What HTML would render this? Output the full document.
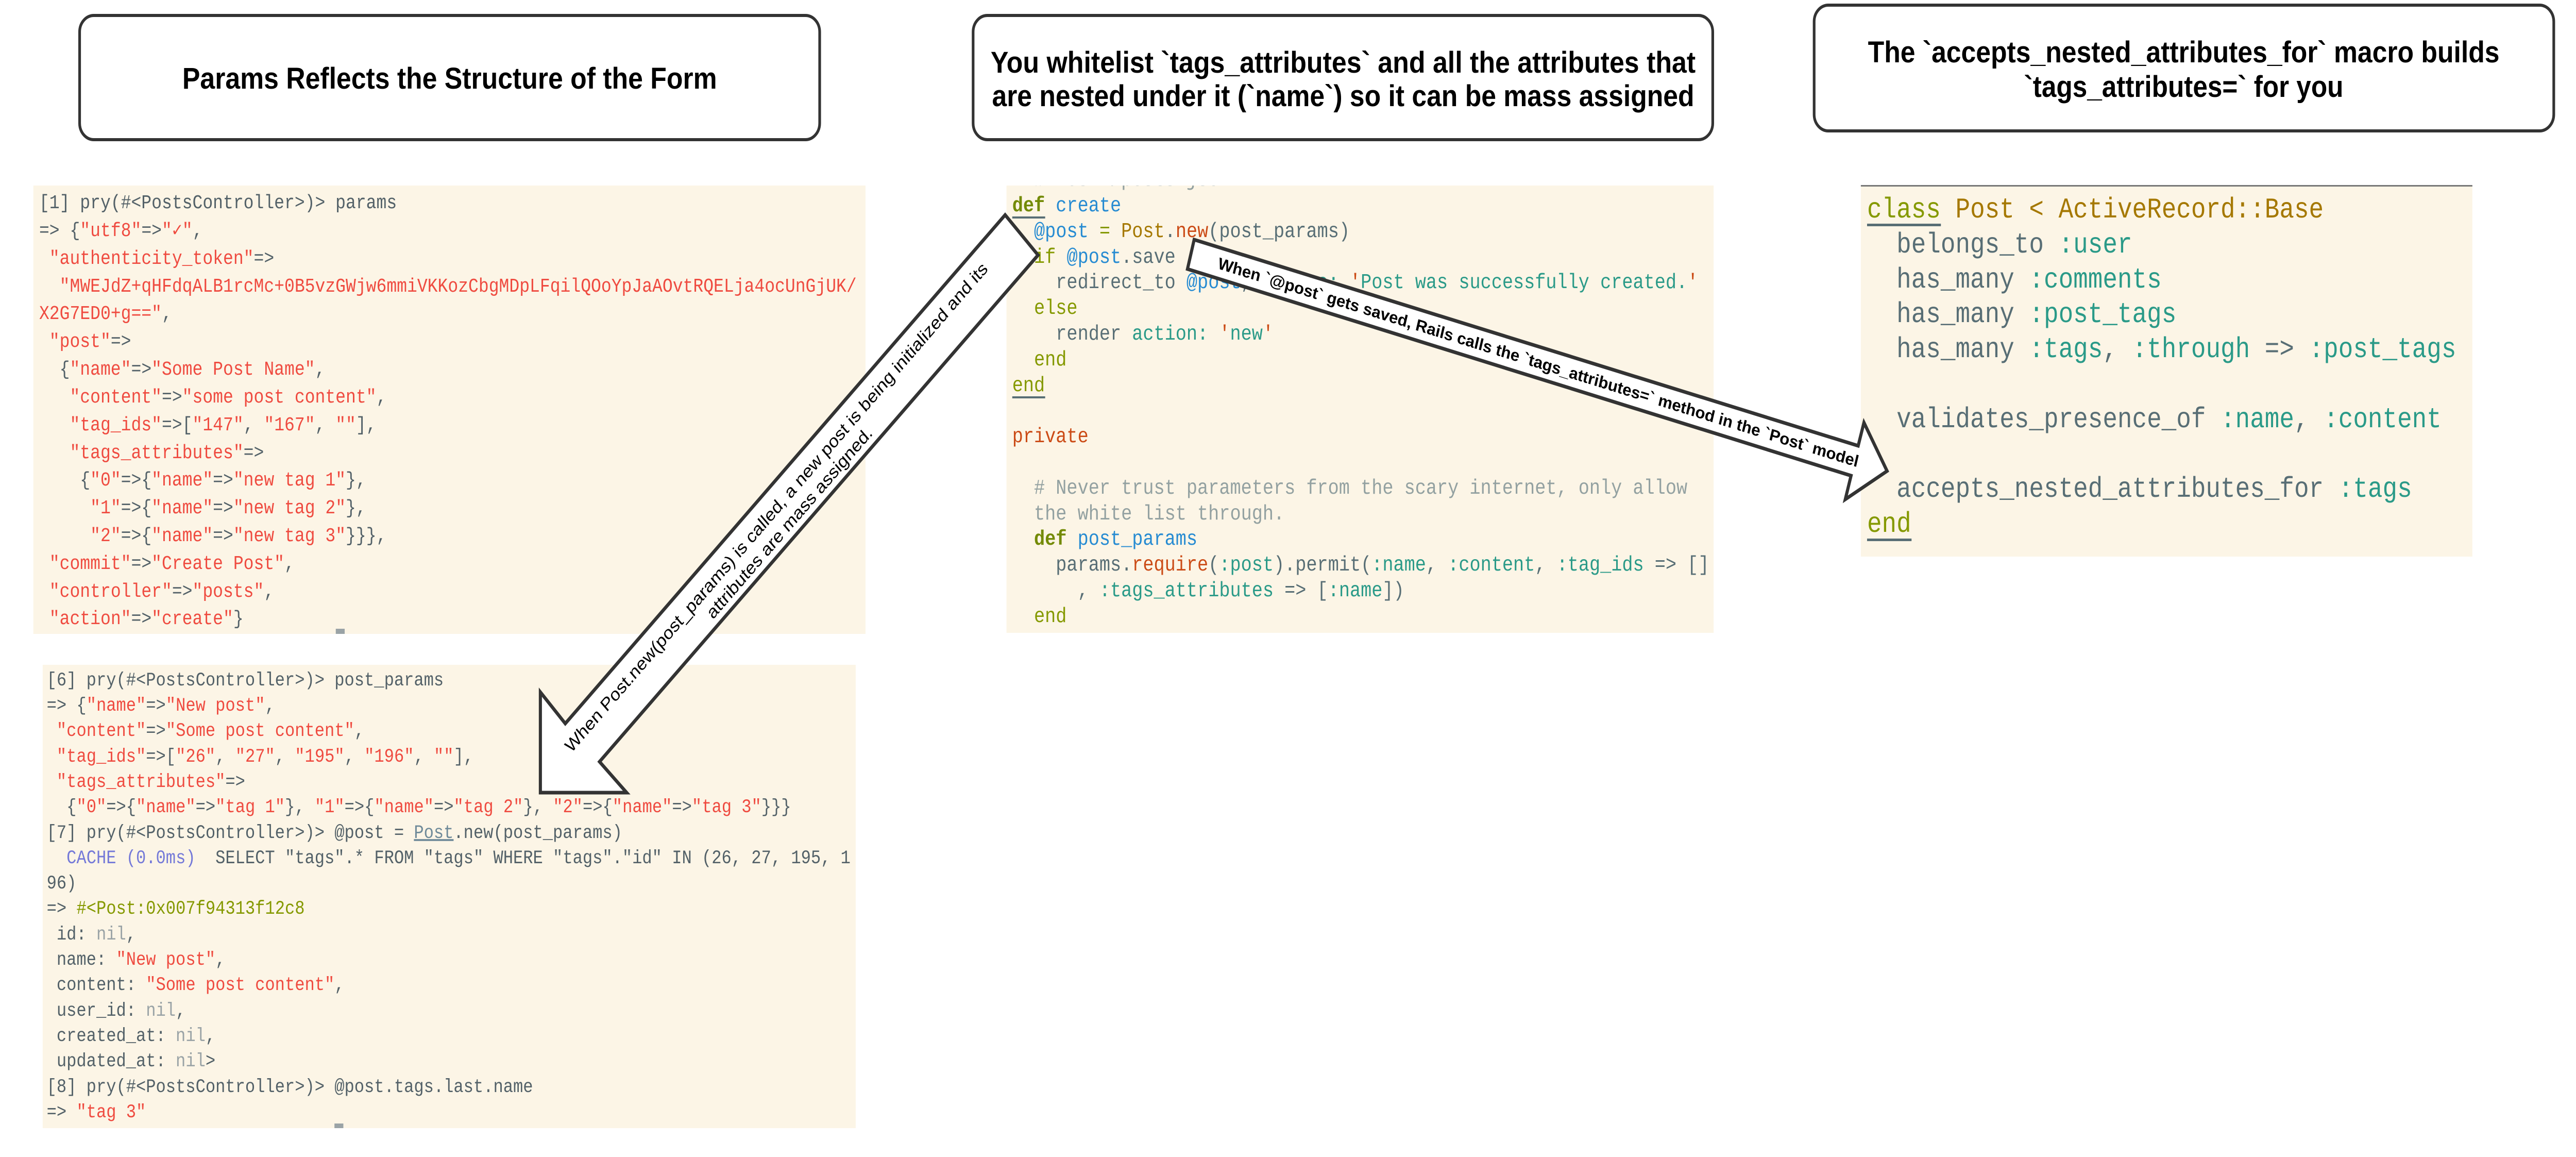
<!DOCTYPE html>
<html><head><meta charset="utf-8">
<style>
html,body{margin:0;padding:0;background:#fff;overflow:hidden;}
svg{display:block;width:100vw;height:100vh;}
.m text{font-family:"Liberation Mono","DejaVu Sans Mono",monospace;white-space:pre;fill:#536168;}
.m .r{fill:#ef4b40}.m .g{fill:#9aa3a6}.m .ol{fill:#859900}.m .pu{fill:#7479d8}
.m .kw{fill:#738a05;font-weight:bold}.m .bl{fill:#268bd2}.m .br{fill:#a57800}.m .rd{fill:#cb4b16}.m .tl{fill:#2a9a88}.m .cm{fill:#93a1a1}.m .sl{fill:#586e75}
</style></head><body>
<svg viewBox="0 0 5792 2245" preserveAspectRatio="none" xmlns="http://www.w3.org/2000/svg" xml:space="preserve" font-family="Liberation Sans, Arial, sans-serif">
<defs>
<clipPath id="c1"><rect x="75" y="360" width="1871" height="870"/></clipPath>
<clipPath id="c2"><rect x="96" y="1290" width="1828" height="899"/></clipPath>
<clipPath id="c3"><rect x="2263" y="360" width="1590" height="868"/></clipPath>
<clipPath id="c4"><rect x="4184" y="360" width="1375" height="720"/></clipPath>
</defs>

<rect x="75" y="360" width="1871" height="870" fill="#fcf5e6"/>
<rect x="96" y="1290" width="1828" height="899" fill="#fcf5e6"/>
<rect x="2263" y="360" width="1590" height="868" fill="#fcf5e6"/>
<rect x="4184" y="360" width="1375" height="720" fill="#fcf5e6"/>
<rect x="4184" y="359" width="1375" height="3" fill="#777"/>

<g class="m" clip-path="url(#c1)" font-size="38.3">
<text x="88" y="404">[1] pry(#&lt;PostsController&gt;)&gt; params</text>
<text x="88" y="458">=&gt; {<tspan class="r">"utf8"</tspan>=&gt;<tspan class="r">"✓"</tspan>,</text>
<text x="88" y="512"> <tspan class="r">"authenticity_token"</tspan>=&gt;</text>
<text x="88" y="566">  <tspan class="r">"MWEJdZ+qHFdqALB1rcMc+0B5vzGWjw6mmiVKKozCbgMDpLFqilQOoYpJaAOvtRQELja4ocUnGjUK/</tspan></text>
<text x="88" y="619"><tspan class="r">X2G7ED0+g=="</tspan>,</text>
<text x="88" y="673"> <tspan class="r">"post"</tspan>=&gt;</text>
<text x="88" y="727">  {<tspan class="r">"name"</tspan>=&gt;<tspan class="r">"Some Post Name"</tspan>,</text>
<text x="88" y="781">   <tspan class="r">"content"</tspan>=&gt;<tspan class="r">"some post content"</tspan>,</text>
<text x="88" y="835">   <tspan class="r">"tag_ids"</tspan>=&gt;[<tspan class="r">"147"</tspan>, <tspan class="r">"167"</tspan>, <tspan class="r">""</tspan>],</text>
<text x="88" y="889">   <tspan class="r">"tags_attributes"</tspan>=&gt;</text>
<text x="88" y="942">    {<tspan class="r">"0"</tspan>=&gt;{<tspan class="r">"name"</tspan>=&gt;<tspan class="r">"new tag 1"</tspan>},</text>
<text x="88" y="996">     <tspan class="r">"1"</tspan>=&gt;{<tspan class="r">"name"</tspan>=&gt;<tspan class="r">"new tag 2"</tspan>},</text>
<text x="88" y="1050">     <tspan class="r">"2"</tspan>=&gt;{<tspan class="r">"name"</tspan>=&gt;<tspan class="r">"new tag 3"</tspan>}}},</text>
<text x="88" y="1104"> <tspan class="r">"commit"</tspan>=&gt;<tspan class="r">"Create Post"</tspan>,</text>
<text x="88" y="1158"> <tspan class="r">"controller"</tspan>=&gt;<tspan class="r">"posts"</tspan>,</text>
<text x="88" y="1211"> <tspan class="r">"action"</tspan>=&gt;<tspan class="r">"create"</tspan>}</text>
<text x="88" y="1265">[2] pry(#&lt;PostsController&gt;)&gt;</text>
<rect x="755" y="1220" width="20" height="10" fill="#9aa3a6"/>
</g>

<g class="m" clip-path="url(#c2)" font-size="37.2">
<text x="105" y="1330">[6] pry(#&lt;PostsController&gt;)&gt; post_params</text>
<text x="105" y="1379">=&gt; {<tspan class="r">"name"</tspan>=&gt;<tspan class="r">"New post"</tspan>,</text>
<text x="105" y="1428"> <tspan class="r">"content"</tspan>=&gt;<tspan class="r">"Some post content"</tspan>,</text>
<text x="105" y="1478"> <tspan class="r">"tag_ids"</tspan>=&gt;[<tspan class="r">"26"</tspan>, <tspan class="r">"27"</tspan>, <tspan class="r">"195"</tspan>, <tspan class="r">"196"</tspan>, <tspan class="r">""</tspan>],</text>
<text x="105" y="1527"> <tspan class="r">"tags_attributes"</tspan>=&gt;</text>
<text x="105" y="1576">  {<tspan class="r">"0"</tspan>=&gt;{<tspan class="r">"name"</tspan>=&gt;<tspan class="r">"tag 1"</tspan>}, <tspan class="r">"1"</tspan>=&gt;{<tspan class="r">"name"</tspan>=&gt;<tspan class="r">"tag 2"</tspan>}, <tspan class="r">"2"</tspan>=&gt;{<tspan class="r">"name"</tspan>=&gt;<tspan class="r">"tag 3"</tspan>}}}</text>
<text x="105" y="1626">[7] pry(#&lt;PostsController&gt;)&gt; @post = <tspan fill="#6f8a99" text-decoration="underline">Post</tspan>.new(post_params)</text>
<text x="105" y="1675">  <tspan class="pu">CACHE (0.0ms)</tspan>  SELECT "tags".* FROM "tags" WHERE "tags"."id" IN (26, 27, 195, 1</text>
<text x="105" y="1724">96)</text>
<text x="105" y="1773">=&gt; <tspan class="ol">#&lt;Post:0x007f94313f12c8</tspan></text>
<text x="105" y="1823"> id: <tspan class="g">nil</tspan>,</text>
<text x="105" y="1872"> name: <tspan class="r">"New post"</tspan>,</text>
<text x="105" y="1921"> content: <tspan class="r">"Some post content"</tspan>,</text>
<text x="105" y="1971"> user_id: <tspan class="g">nil</tspan>,</text>
<text x="105" y="2020"> created_at: <tspan class="g">nil</tspan>,</text>
<text x="105" y="2069"> updated_at: <tspan class="g">nil</tspan>&gt;</text>
<text x="105" y="2119">[8] pry(#&lt;PostsController&gt;)&gt; @post.tags.last.name</text>
<text x="105" y="2168">=&gt; <tspan class="r">"tag 3"</tspan></text>
<rect x="752" y="2180" width="20" height="9" fill="#9aa3a6"/>
</g>

<g class="m" clip-path="url(#c3)" font-size="40.8">
<text x="2276" y="360" class="cm">  # POST /posts.json</text>
<text x="2276" y="410"><tspan class="kw">def</tspan> <tspan class="bl">create</tspan></text>
<text x="2276" y="460" class="sl">  <tspan class="bl">@post</tspan> <tspan class="ol">=</tspan> <tspan class="br">Post</tspan>.<tspan class="rd">new</tspan>(post_params)</text>
<text x="2276" y="510" class="sl">  <tspan class="ol">if</tspan> <tspan class="bl">@post</tspan>.save</text>
<text x="2276" y="559" class="sl">    redirect_to <tspan class="bl">@post</tspan>, <tspan class="tl">notice:</tspan> <tspan class="rd">'</tspan><tspan class="tl">Post was successfully created.</tspan><tspan class="rd">'</tspan></text>
<text x="2276" y="609" class="ol">  else</text>
<text x="2276" y="659" class="sl">    render <tspan class="tl">action:</tspan> <tspan class="rd">'</tspan><tspan class="tl">new</tspan><tspan class="rd">'</tspan></text>
<text x="2276" y="709" class="ol">  end</text>
<text x="2276" y="759" class="ol">end</text>
<text x="2276" y="858" class="rd">private</text>
<text x="2276" y="958" class="cm">  # Never trust parameters from the scary internet, only allow</text>
<text x="2276" y="1008" class="cm">  the white list through.</text>
<text x="2276" y="1057">  <tspan class="kw">def</tspan> <tspan class="bl">post_params</tspan></text>
<text x="2276" y="1107" class="sl">    params.<tspan class="rd">require</tspan>(<tspan class="tl">:post</tspan>).permit(<tspan class="tl">:name</tspan>, <tspan class="tl">:content</tspan>, <tspan class="tl">:tag_ids</tspan> =&gt; []</text>
<text x="2276" y="1157" class="sl">      , <tspan class="tl">:tags_attributes</tspan> =&gt; [<tspan class="tl">:name</tspan>])</text>
<text x="2276" y="1207" class="ol">  end</text>
<rect x="2276" y="420" width="74" height="4" fill="#586e75"/>
<rect x="2276" y="769" width="74" height="4" fill="#586e75"/>
</g>

<g class="m" clip-path="url(#c4)" font-size="55.2">
<text x="4198" y="422"><tspan class="ol">class</tspan> <tspan class="br">Post &lt; ActiveRecord::Base</tspan></text>
<text x="4198" y="490" class="sl">  belongs_to <tspan class="tl">:user</tspan></text>
<text x="4198" y="558" class="sl">  has_many <tspan class="tl">:comments</tspan></text>
<text x="4198" y="625" class="sl">  has_many <tspan class="tl">:post_tags</tspan></text>
<text x="4198" y="693" class="sl">  has_many <tspan class="tl">:tags</tspan>, <tspan class="tl">:through</tspan> =&gt; <tspan class="tl">:post_tags</tspan></text>
<text x="4198" y="829" class="sl">  validates_presence_of <tspan class="tl">:name</tspan>, <tspan class="tl">:content</tspan></text>
<text x="4198" y="964" class="sl">  accepts_nested_attributes_for <tspan class="tl">:tags</tspan></text>
<text x="4198" y="1032" class="ol">end</text>
<rect x="4198" y="434" width="166" height="5" fill="#586e75"/>
<rect x="4198" y="1045" width="100" height="5" fill="#586e75"/>
</g>

<rect x="179" y="30" width="1664" height="241" rx="32" fill="#fff" stroke="#333" stroke-width="6"/>
<text x="1011" y="172" text-anchor="middle" font-size="58" font-weight="bold" textLength="1202" lengthAdjust="spacingAndGlyphs">Params Reflects the Structure of the Form</text>

<rect x="2188" y="30" width="1663" height="241" rx="32" fill="#fff" stroke="#333" stroke-width="6"/>
<text x="3020" y="141" text-anchor="middle" font-size="58" font-weight="bold" textLength="1585" lengthAdjust="spacingAndGlyphs">You whitelist `tags_attributes` and all the attributes that</text>
<text x="3020" y="206" text-anchor="middle" font-size="58" font-weight="bold" textLength="1579" lengthAdjust="spacingAndGlyphs">are nested under it (`name`) so it can be mass assigned</text>

<rect x="4079" y="10" width="1663" height="244" rx="32" fill="#fff" stroke="#333" stroke-width="6"/>
<text x="4910" y="121" text-anchor="middle" font-size="58" font-weight="bold" textLength="1420" lengthAdjust="spacingAndGlyphs">The `accepts_nested_attributes_for` macro builds</text>
<text x="4910" y="188" text-anchor="middle" font-size="58" font-weight="bold" textLength="718" lengthAdjust="spacingAndGlyphs">`tags_attributes=` for you</text>

<polygon points="2260,417 2334,495 1348,1478 1409,1538 1215,1538 1215,1343 1271,1404" fill="#fff" stroke="#333" stroke-width="7"/>
<g transform="translate(1758,997) rotate(-45)">
<text x="0" y="-6" text-anchor="middle" font-size="35" textLength="1327" lengthAdjust="spacingAndGlyphs">When Post.new(post_params) is called, a new post is being initialized and its</text>
<text x="0" y="36" text-anchor="middle" font-size="35" textLength="510" lengthAdjust="spacingAndGlyphs">attributes are mass assigned.</text>
</g>

<polygon points="2685,465 4178,865 4191,820 4243,914 4149,969 4162,923 2670,522" fill="#fff" stroke="#333" stroke-width="7"/>
<g transform="translate(3459,703) rotate(15)">
<text x="0" y="11" text-anchor="middle" font-size="32" font-weight="bold" textLength="1490" lengthAdjust="spacingAndGlyphs">When `@post` gets saved, Rails calls the `tags_attributes=` method in the `Post` model</text>
</g>
</svg>
</body></html>
